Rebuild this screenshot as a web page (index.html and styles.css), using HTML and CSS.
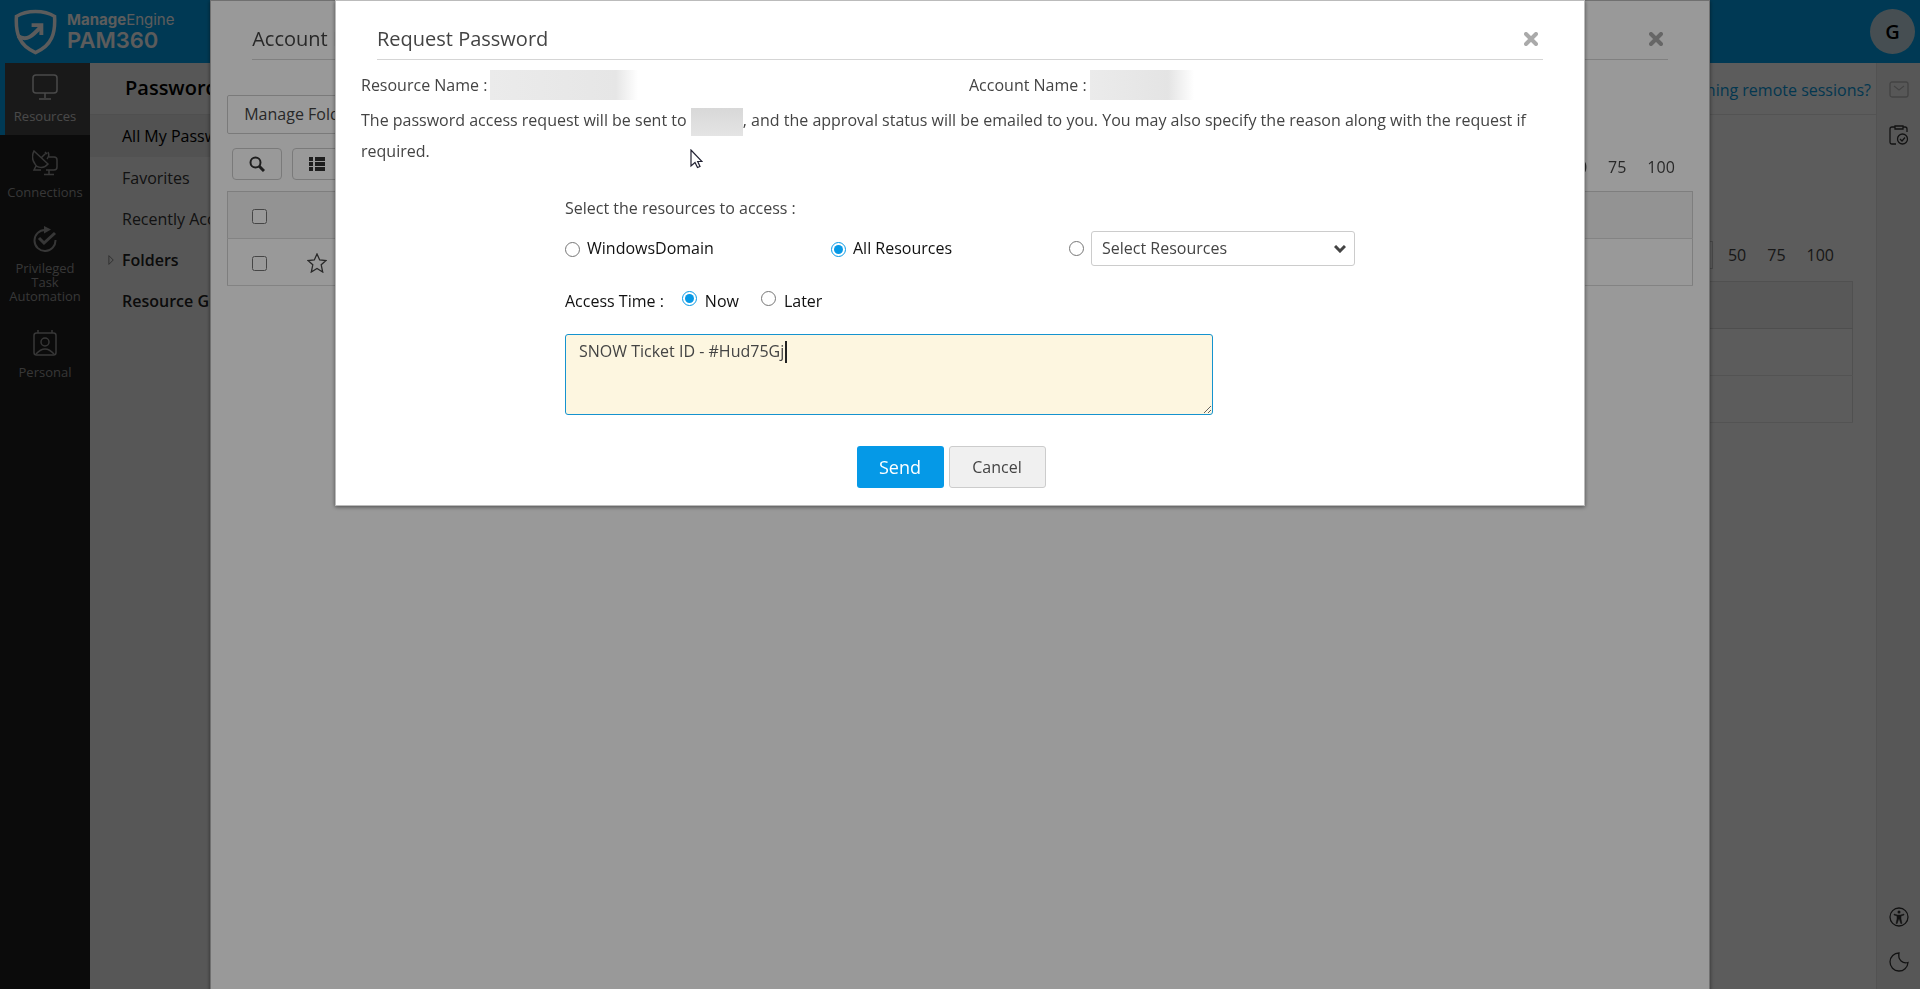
FILE: index.html
```html
<!DOCTYPE html>
<html lang="en">
<head>
    <meta charset="UTF-8">
    <meta name="viewport" content="width=device-width, initial-scale=1.0">
    <title>ManageEngine PAM360</title>
    <link rel="stylesheet" href="styles.css">
</head>
<body>
    <div class="app">
        <header class="topbar">
            <div class="brand">
                <svg class="brand-logo" viewBox="0 0 44 46" fill="none" stroke="#fff" stroke-width="3.6">
                    <path d="M22 2C16 2 8 3.500 2.500 7C1.500 24 5 37 22 44C39 37 42.500 24 41.500 7C36 3.500 28 2 22 2Z"/>
                    <path d="M4 27C13 33 19 27 28 17" stroke-width="4"/>
                    <path d="M18 16H28V26" stroke-width="4"/>
                </svg>
                <div class="brand-text">
                    <div class="brand-top"><b>Manage</b>Engine</div>
                    <div class="brand-name">PAM360</div>
                </div>
            </div>
            <button class="avatar">G</button>
        </header>

        <div class="main">
            <nav class="nav">
                <a class="nav-item active" href="#">
                    <svg viewBox="0 0 26 26"><rect x="1" y="1" width="24" height="18" rx="3"/><path d="M13 19v5M7 25h12"/></svg>
                    <span>Resources</span>
                </a>
                <a class="nav-item" href="#">
                    <svg viewBox="0 0 26 26"><path d="M2 1L16 14C12 19 5 18 3 14C0 10 0 5 2 1ZM9 8l5-5M13 2l2 2M4 16l-2 4h7M17 7h5q3 0 3 3v7q0 3-3 3h-8M17 20v4M12 24.500h10M16 2q2 4-1 7"/></svg>
                    <span>Connections</span>
                </a>
                <a class="nav-item" href="#">
                    <svg viewBox="0 0 26 26"><path d="M13 4A10.500 10.500 0 1 0 23.500 14" stroke-width="2"/><path d="M12 0l7 3.500-7 4z" fill="#9a9a9a" stroke="none"/><path d="M7 12l5 5L23 7" stroke-width="3"/></svg>
                    <span>Privileged Task Automation</span>
                </a>
                <a class="nav-item" href="#">
                    <svg viewBox="0 0 26 26" stroke-width="2"><rect x="2" y="3" width="22" height="22" rx="2.500"/><path d="M6 0v3M20 0v3M4 24q9-10 18 0"/><circle cx="13" cy="12" r="4"/></svg>
                    <span>Personal</span>
                </a>
            </nav>

            <aside class="sidebar">
                <h2>Passwords</h2>
                <a class="side-link selected" href="#">All My Passwords</a>
                <a class="side-link" href="#">Favorites</a>
                <a class="side-link" href="#">Recently Accessed</a>
                <a class="side-link group" href="#"><svg class="caret" viewBox="0 0 8 12"><path d="M1 1l5 5-5 5z"/></svg>Folders</a>
                <a class="side-link group" href="#">Resource Groups</a>
            </aside>

            <section class="content">
                <div class="content-head"><a href="#">Facing issues launching remote sessions?</a></div>
                <div class="content-body">
                    <div class="pager"><span class="current">25</span><span>50</span><span>75</span><span>100</span></div>
                    <table class="grid">
                        <tr><th></th></tr>
                        <tr><td></td></tr>
                        <tr><td></td></tr>
                    </table>
                </div>
            </section>

            <div class="rail">
                <svg class="faded" viewBox="0 0 20 20"><rect x="1" y="2" width="18" height="15" rx="2"/><path d="M5 6l5 4 5-4"/></svg>
                <svg viewBox="0 0 20 20"><path d="M7 19H3q-2 0-2-2V4q0-2 2-2h3M14 2h2q2 0 2 2v3M6 1h8v3H6z"/><circle cx="13.500" cy="14" r="5"/><path d="M11 14l2 2 3-3.500"/></svg>
                <svg class="push" viewBox="0 0 20 20"><circle cx="10" cy="10" r="9"/><circle cx="10" cy="5" r="1.500" fill="#333" stroke="none"/><path d="M5 7l3.500 1h3L15 7v1l-3 1v3l1 4.500h-1.200L10.300 12h-.6l-1.500 4.500H7L8 12V9L5 8z" fill="#333" stroke-width=".5"/></svg>
                <svg viewBox="0 0 20 20"><path d="M10 1A9 9 0 1 0 19 10.500C14 12 8.500 8 10 1Z"/></svg>
            </div>
        </div>
    </div>

    <div class="overlay">
        <div class="modal accounts">
            <div class="modal-head">
                <h3>Account Details</h3>
                <button class="close" aria-label="Close"><svg viewBox="0 0 14 14"><path d="M2 2l10 10M12 2L2 12"/></svg></button>
            </div>
            <div class="accounts-body">
                <button class="folders-btn">Manage Folders</button>
                <div class="tools">
                    <button class="tool" aria-label="Search"><svg viewBox="0 0 16 16"><circle cx="6.500" cy="6.500" r="5"/><path d="M10 10l5 5" stroke-width="3"/></svg></button>
                    <button class="tool" aria-label="Columns"><svg viewBox="0 0 16 16"><path d="M0 3h4M6 3h10M0 8h4M6 8h10M0 13h4M6 13h10" stroke-width="4"/></svg></button>
                    <div class="pager"><span>25</span><span>50</span><span>75</span><span>100</span></div>
                </div>
                <table class="grid">
                    <tr><th><input type="checkbox" aria-label="Select all"></th></tr>
                    <tr><td><input type="checkbox" aria-label="Select account"><svg class="star" viewBox="0 0 20 20"><path d="M10 1l2.700 6 6.300.5-4.800 4.300L15.700 19 10 15.500 4.300 19l1.500-7.200L1 7.500 7.300 7z"/></svg></td></tr>
                </table>
            </div>
        </div>
    </div>

    <div class="overlay">
        <div class="modal request">
            <div class="modal-head">
                <h3>Request Password</h3>
                <button class="close" aria-label="Close"><svg viewBox="0 0 14 14"><path d="M2 2l10 10M12 2L2 12"/></svg></button>
            </div>
            <div class="names">
                <div class="name">Resource Name :<span class="mask wide"></span></div>
                <div class="name">Account Name :<span class="mask medium"></span></div>
            </div>
            <p class="info">The password access request will be sent to <span class="mask small"></span>, and the approval status will be emailed to you. You may also specify the reason along with the request if required.</p>
            <form class="request-form">
                <div class="form-title">Select the resources to access :</div>
                <div class="choices">
                    <label class="choice"><input type="radio" name="scope">WindowsDomain</label>
                    <label class="choice"><input type="radio" name="scope" checked>All Resources</label>
                    <div class="choice">
                        <input type="radio" name="scope" aria-label="Selected resources">
                        <div class="select-wrap">
                            <select aria-label="Select Resources"><option>Select Resources</option></select>
                            <svg class="chevron" viewBox="0 0 12 8"><path d="M1 1l5 5 5-5"/></svg>
                        </div>
                    </div>
                </div>
                <div class="times">
                    <span>Access Time :</span>
                    <label><input type="radio" name="time" checked>Now</label>
                    <label><input type="radio" name="time">Later</label>
                </div>
                <div class="reason-wrap">
                    <textarea class="reason" aria-label="Reason">SNOW Ticket ID - #Hud75Gj</textarea>
                    <span class="text-caret"></span>
                </div>
            </form>
            <div class="actions">
                <button class="btn-send">Send</button>
                <button class="btn-cancel">Cancel</button>
            </div>
        </div>
    </div>

    <svg class="cursor" viewBox="0 0 13 20"><path d="M1 1v16l4-3.500 2.500 5 2.500-1-2.300-5H12z"/></svg>
</body>
</html>
```
FILE: styles.css
```css
* { box-sizing: border-box; }
body {
    margin: 0;
    font-family: 'Open Sans', 'Noto Sans', sans-serif;
    font-size: 16px;
    color: #444;
    overflow: hidden;
}
a { text-decoration: none; color: inherit; }
button, input, select, textarea { font: inherit; color: inherit; margin: 0; }
button { cursor: pointer; }
h2, h3, p { margin: 0; font-weight: 400; }
svg { display: block; fill: none; }

/* page behind the dialogs */
.app {
    height: 100vh;
    display: flex;
    flex-direction: column;
}
.topbar {
    height: 63px;
    flex: none;
    background: #00a0ea;
    display: flex;
    justify-content: space-between;
    align-items: center;
    padding: 0 5px 0 14px;
}
.brand { display: flex; align-items: center; gap: 10px; }
.brand-logo { width: 43px; height: 46px; }
.brand-text { font-family: Inter, sans-serif; color: #fff; }
.brand-top { font-size: 15px; line-height: 16px; }
.brand-name { font-size: 22px; line-height: 24px; font-weight: 600; }
.avatar {
    width: 45px;
    height: 45px;
    border: 0;
    border-radius: 50%;
    background: #c3dbe4;
    color: #000;
    font-size: 20px;
    font-weight: 600;
}
.main { flex: 1; display: flex; min-height: 0; }
.nav {
    width: 90px;
    flex: none;
    background: #202020;
    color: #9a9a9a;
    font-size: 13px;
    line-height: 14px;
    text-align: center;
}
.nav-item {
    display: flex;
    flex-direction: column;
    align-items: center;
    gap: 9px;
    padding: 11px 4px 12px;
    margin-bottom: 4px;
}
.nav-item svg { width: 26px; height: 26px; stroke: #9a9a9a; stroke-width: 1.5; }
.nav-item.active {
    background: #484848;
    box-shadow: inset 5px 0 #00a0ea;
    color: #ccc;
}
.nav-item.active svg { stroke: #ccc; }
.sidebar {
    width: 270px;
    flex: none;
    background: #f4f4f4;
    color: #333;
}
.sidebar h2 {
    height: 52px;
    padding-left: 35px;
    font-size: 20px;
    line-height: 50px;
    font-weight: 600;
    color: #000;
    border-bottom: 1px solid #ddd;
}
.side-link {
    display: flex;
    align-items: center;
    height: 41px;
    padding-left: 32px;
    position: relative;
}
.side-link.selected { background: #e4e4e4; color: #000; height: 42px; }
.side-link.group { font-weight: 600; color: #222; }
.caret { position: absolute; left: 18px; width: 7px; height: 12px; stroke: #777; }
.content { flex: 1; min-width: 0; background: #fff; }
.content-head {
    height: 52px;
    line-height: 54px;
    padding-right: 5px;
    text-align: right;
    color: #0a9be0;
    border-bottom: 1px solid #e8e8e8;
}
.content-body { padding: 126px 23px 0; }
.pager { display: flex; justify-content: flex-end; align-items: center; gap: 21px; height: 28px; }
.content .pager { padding-right: 19px; margin-bottom: 12px; }
.current { border: 1px solid #ccc; padding: 2px 8px; margin-right: -6px; }
.grid { width: 100%; border-collapse: collapse; border: 1px solid #d2d2d2; }
.grid th, .grid td {
    height: 47px;
    padding: 0 24px;
    text-align: left;
    border-bottom: 1px solid #dadada;
}
.grid th { background: #f5f5f5; }
.content .grid { border-color: #dedede; }
.content .grid td { border-color: #e6e6e6; }
.rail {
    width: 44px;
    flex: none;
    background: #f4f4f4;
    border-left: 1px solid #e4e4e4;
    display: flex;
    flex-direction: column;
    align-items: center;
    gap: 25px;
    padding: 17px 0;
}
.rail svg { width: 20px; height: 20px; stroke: #333; stroke-width: 1.3; }
.rail .faded { stroke: #bbb; }
.rail .push { margin-top: auto; }

/* dialogs */
.overlay {
    position: fixed;
    inset: 0;
    background: rgba(0, 0, 0, 0.4);
}
.modal {
    box-sizing: content-box;
    margin: 0 auto;
    background: #fff;
    border: 1px solid #bbb;
    box-shadow: 0 1px 4px rgba(0, 0, 0, 0.5);
}
.modal.accounts { width: 78%; height: 100%; }
.modal.request { width: 65%; }
.modal-head {
    display: flex;
    justify-content: space-between;
    align-items: center;
    height: 59px;
    margin: 0 41px;
    padding: 0 3px 0 0;
    border-bottom: 1px solid #d5d5d5;
}
.modal-head h3 { font-size: 20px; line-height: 24px; padding-top: 17px; }
.close { border: 0; background: none; padding: 17px 2px 0; }
.close svg { width: 14px; height: 14px; stroke: #aaa; stroke-width: 4; stroke-linecap: round; }
.accounts-body { padding: 35px 16px; }
.folders-btn {
    height: 39px;
    padding: 0 16px;
    line-height: 34px;
    padding-bottom: 2px;
    background: #fff;
    border: 1px solid #ccc;
    border-radius: 2px;
}
.tools { display: flex; align-items: center; gap: 10px; padding: 14px 18px 11px 5px; }
.tool {
    width: 50px;
    height: 32px;
    display: flex;
    align-items: center;
    justify-content: center;
    background: #fff;
    border: 1px solid #ccc;
    border-radius: 4px;
}
.tool svg { width: 16px; height: 16px; stroke: #333; stroke-width: 2; }
.tools .pager { margin-left: auto; align-items: flex-end; }
.grid input { display: inline-block; vertical-align: middle; width: 15px; height: 15px; }
.star { display: inline-block; vertical-align: middle; width: 20px; height: 20px; margin-left: 40px; stroke: #444; stroke-width: 1.3; }

.names { display: flex; padding: 8px 25px 0; }
.name { display: flex; align-items: center; flex: none; height: 34px; width: 608px; }
.name + .name { flex: 1; }
.mask { background: #ddd; flex: none; height: 30px; }
.mask.wide { width: 148px; background: linear-gradient(90deg, #ebebeb, #e6e6e6 85%, #fff); margin-left: 3px; }
.mask.medium { width: 104px; background: linear-gradient(90deg, #ebebeb, #e4e4e4 75%, #fff); margin-left: 3px; }
.mask.small { display: inline-block; width: 52px; height: 28px; vertical-align: middle; background: linear-gradient(#d8d8d8, #e4e4e4); }
.info { padding: 3px 25px 0; line-height: 30px; }
.request-form { padding: 30px 229px 0; }
.form-title { line-height: 24px; }
.choices { display: flex; align-items: center; margin-top: 11px; color: #111; }
.choice { display: flex; align-items: center; gap: 7px; width: 266px; }
.choice:nth-child(2) { width: 238px; }
input[type="radio"] { width: 15px; height: 15px; accent-color: #0799e6; flex: none; }
label.choice input { margin-top: 3px; }
.select-wrap { position: relative; }
select {
    appearance: none;
    width: 264px;
    height: 35px;
    padding: 0 10px;
    background: #fff;
    border: 1px solid #ccc;
    border-radius: 3px;
    color: #444;
}
.chevron { position: absolute; right: 9px; top: 14px; width: 12px; height: 8px; stroke: #444; stroke-width: 3; }
.times { display: flex; align-items: center; gap: 18px; margin-top: 23px; color: #111; line-height: 24px; }
.times label { display: flex; align-items: center; gap: 8px; margin-right: 4px; }
.times input { margin-bottom: 5px; }
.reason-wrap { position: relative; margin-top: 21px; width: 648px; }
.reason {
    display: block;
    width: 100%;
    height: 81px;
    padding: 5px 13px;
    background: #fdf6e0;
    border: 1px solid #1593cf;
    border-radius: 3px;
    outline: 0;
    color: #444;
}
.text-caret { position: absolute; left: 220px; top: 7px; width: 2px; height: 22px; background: #222; }
.actions { display: flex; justify-content: center; gap: 5px; padding: 31px 18px 17px 0; }
.actions button { height: 42px; border-radius: 3px; }
.btn-send { width: 87px; background: #0599e7; border: 0; color: #fff; font-size: 18px; font-weight: 500; }
.btn-cancel { width: 97px; background: #f0f0f0; border: 1px solid #ccc; }
.cursor { position: absolute; left: 690px; top: 149px; width: 13px; height: 20px; fill: #fff; stroke: #223; stroke-width: 1.2; }
```
